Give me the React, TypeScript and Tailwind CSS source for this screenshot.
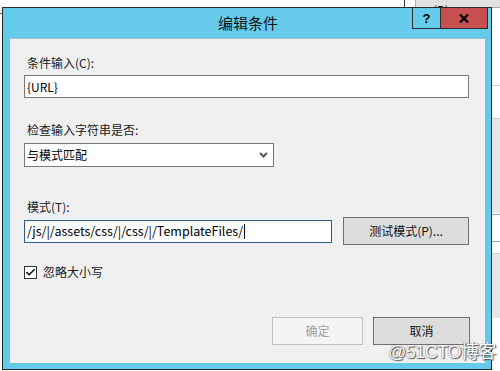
import { Check } from "lucide-react";

const font = "font-['Segoe_UI','Noto_Sans_CJK_SC','Noto_Sans',sans-serif]";

function Label({ text, className }: { text: string; className: string }) {
  return <div className={`ml-[3px] h-[16px] text-[12px] leading-[16px] text-[#1a1a1a] ${className}`}>{text}</div>;
}

export default function App() {
  return (
    <div className={`relative h-[371px] w-[500px] overflow-hidden bg-white pt-[7px] pl-[2px] ${font}`}>
      {/* bits of the window behind */}
      <div className="absolute left-[404px] top-0 h-[7px] w-px bg-[#3a3a3a]" />
      <div className="absolute left-[415px] top-[-7px] flex h-[15px] w-[90px] items-center border border-[#adadad] bg-[#e1e1e1] pl-[17px] text-[12px] text-[#1a1a1a]">
        测试模式(P)...
      </div>
      <div className="absolute left-0 top-[13px] h-px w-[2px] bg-[#555]" />
      <div className="absolute left-[492px] top-[85px] h-px w-[8px] bg-[#d0d0d0]" />
      <div className="absolute left-[492px] top-[118px] h-[95px] w-[8px] border-t border-[#d0d0d0] bg-[#e6e6e6]" />
      <div className="absolute left-[492px] top-[214px] h-[28px] w-[8px] border-y border-[#8aa9c8] bg-white" />
      <div className="absolute left-[492px] top-[253px] h-[65px] w-[8px] border-t border-[#d0d0d0] bg-[#e6e6e6]" />

      <div className="relative flex h-[363px] w-[490px] flex-col border border-[#2b2b2b] bg-[#66cbea]">
        <div className="flex h-[30px] items-center justify-center pl-[2px] text-[15px] text-[#111]">编辑条件</div>

        <div className="absolute right-[3px] top-[-1px] flex">
          <div className="flex h-[22px] w-[29px] items-center justify-center border border-[#2b2b2b] text-[13px] font-bold leading-none text-black font-['Liberation_Sans',sans-serif]">
            ?
          </div>
          <div className="flex h-[22px] w-[47px] items-center justify-center border border-l-0 border-[#2b2b2b] bg-[#c75050]">
            <svg width="10" height="9" viewBox="0 0 10 9">
              <path d="M1 0.5 L9 8.5 M9 0.5 L1 8.5" stroke="#000" strokeWidth="2.4" />
            </svg>
          </div>
        </div>

        <div className="ml-[7px] flex h-[325px] w-[475px] flex-col border-t border-[#9fbccb] bg-[#f0f0f0] pl-[14px]">
          <Label text="条件输入(C):" className="mt-[16px]" />
          <div className="mt-[4px] flex h-[23px] w-[445px] items-center border border-[#7a7a7a] bg-white pl-[2px] text-[12px] text-black">
            {"{URL}"}
          </div>

          <Label text="检查输入字符串是否:" className="mt-[24px]" />
          <div className="mt-[5px] flex h-[24px] w-[250px] items-center justify-between border border-[#7a7a7a] bg-white pl-[2px] pr-[5px] text-[12px] text-black">
            <span>与模式匹配</span>
            <svg width="9" height="6" viewBox="0 0 9 6">
              <path d="M1 1 L4.5 4.5 L8 1" stroke="#555" strokeWidth="2" fill="none" />
            </svg>
          </div>

          <Label text="模式(T):" className="mt-[32px]" />
          <div className="mt-[2px] flex h-[28px] items-center gap-[11px]">
            <div className="flex h-[23px] w-[308px] items-center border border-[#2b5f8f] bg-white pl-[2px] text-[12.5px] text-black">
              /js/|/assets/css/|/css/|/TemplateFiles/
              <span className="ml-px inline-block h-[15px] w-px bg-black" />
            </div>
            <div className="flex h-[28px] w-[126px] items-center justify-center border border-[#707070] bg-[#dddddd] text-[12px] text-[#111]">
              测试模式(P)...
            </div>
          </div>

          <div className="mt-[19px] flex items-center">
            <div className="flex h-[13px] w-[13px] items-center justify-center border border-[#333] bg-white">
              <Check size={11} strokeWidth={3.5} color="#111" />
            </div>
            <span className="ml-[6px] text-[12px] leading-[16px] text-[#1a1a1a]">忽略大小写</span>
          </div>

          <div className="mt-auto mb-[18px] flex gap-[10px] pl-[248px]">
            <div className="flex h-[28px] w-[91px] items-center justify-center border border-[#bfbfbf] bg-[#f4f4f4] text-[12px] text-[#a0a0a0]">
              确定
            </div>
            <div className="flex h-[28px] w-[97px] items-center justify-center border border-[#707070] bg-[#dddddd] text-[12px] text-[#111]">
              取消
            </div>
          </div>
        </div>
      </div>

      <div className="absolute left-[388px] top-[341px] whitespace-nowrap text-[18px] leading-[22px] tracking-[-0.5px] text-white [text-shadow:0_0_1px_#444,1px_1px_1px_#555] font-['Liberation_Sans','Noto_Sans_CJK_SC',sans-serif]">
        @51CTO博客
      </div>
    </div>
  );
}
